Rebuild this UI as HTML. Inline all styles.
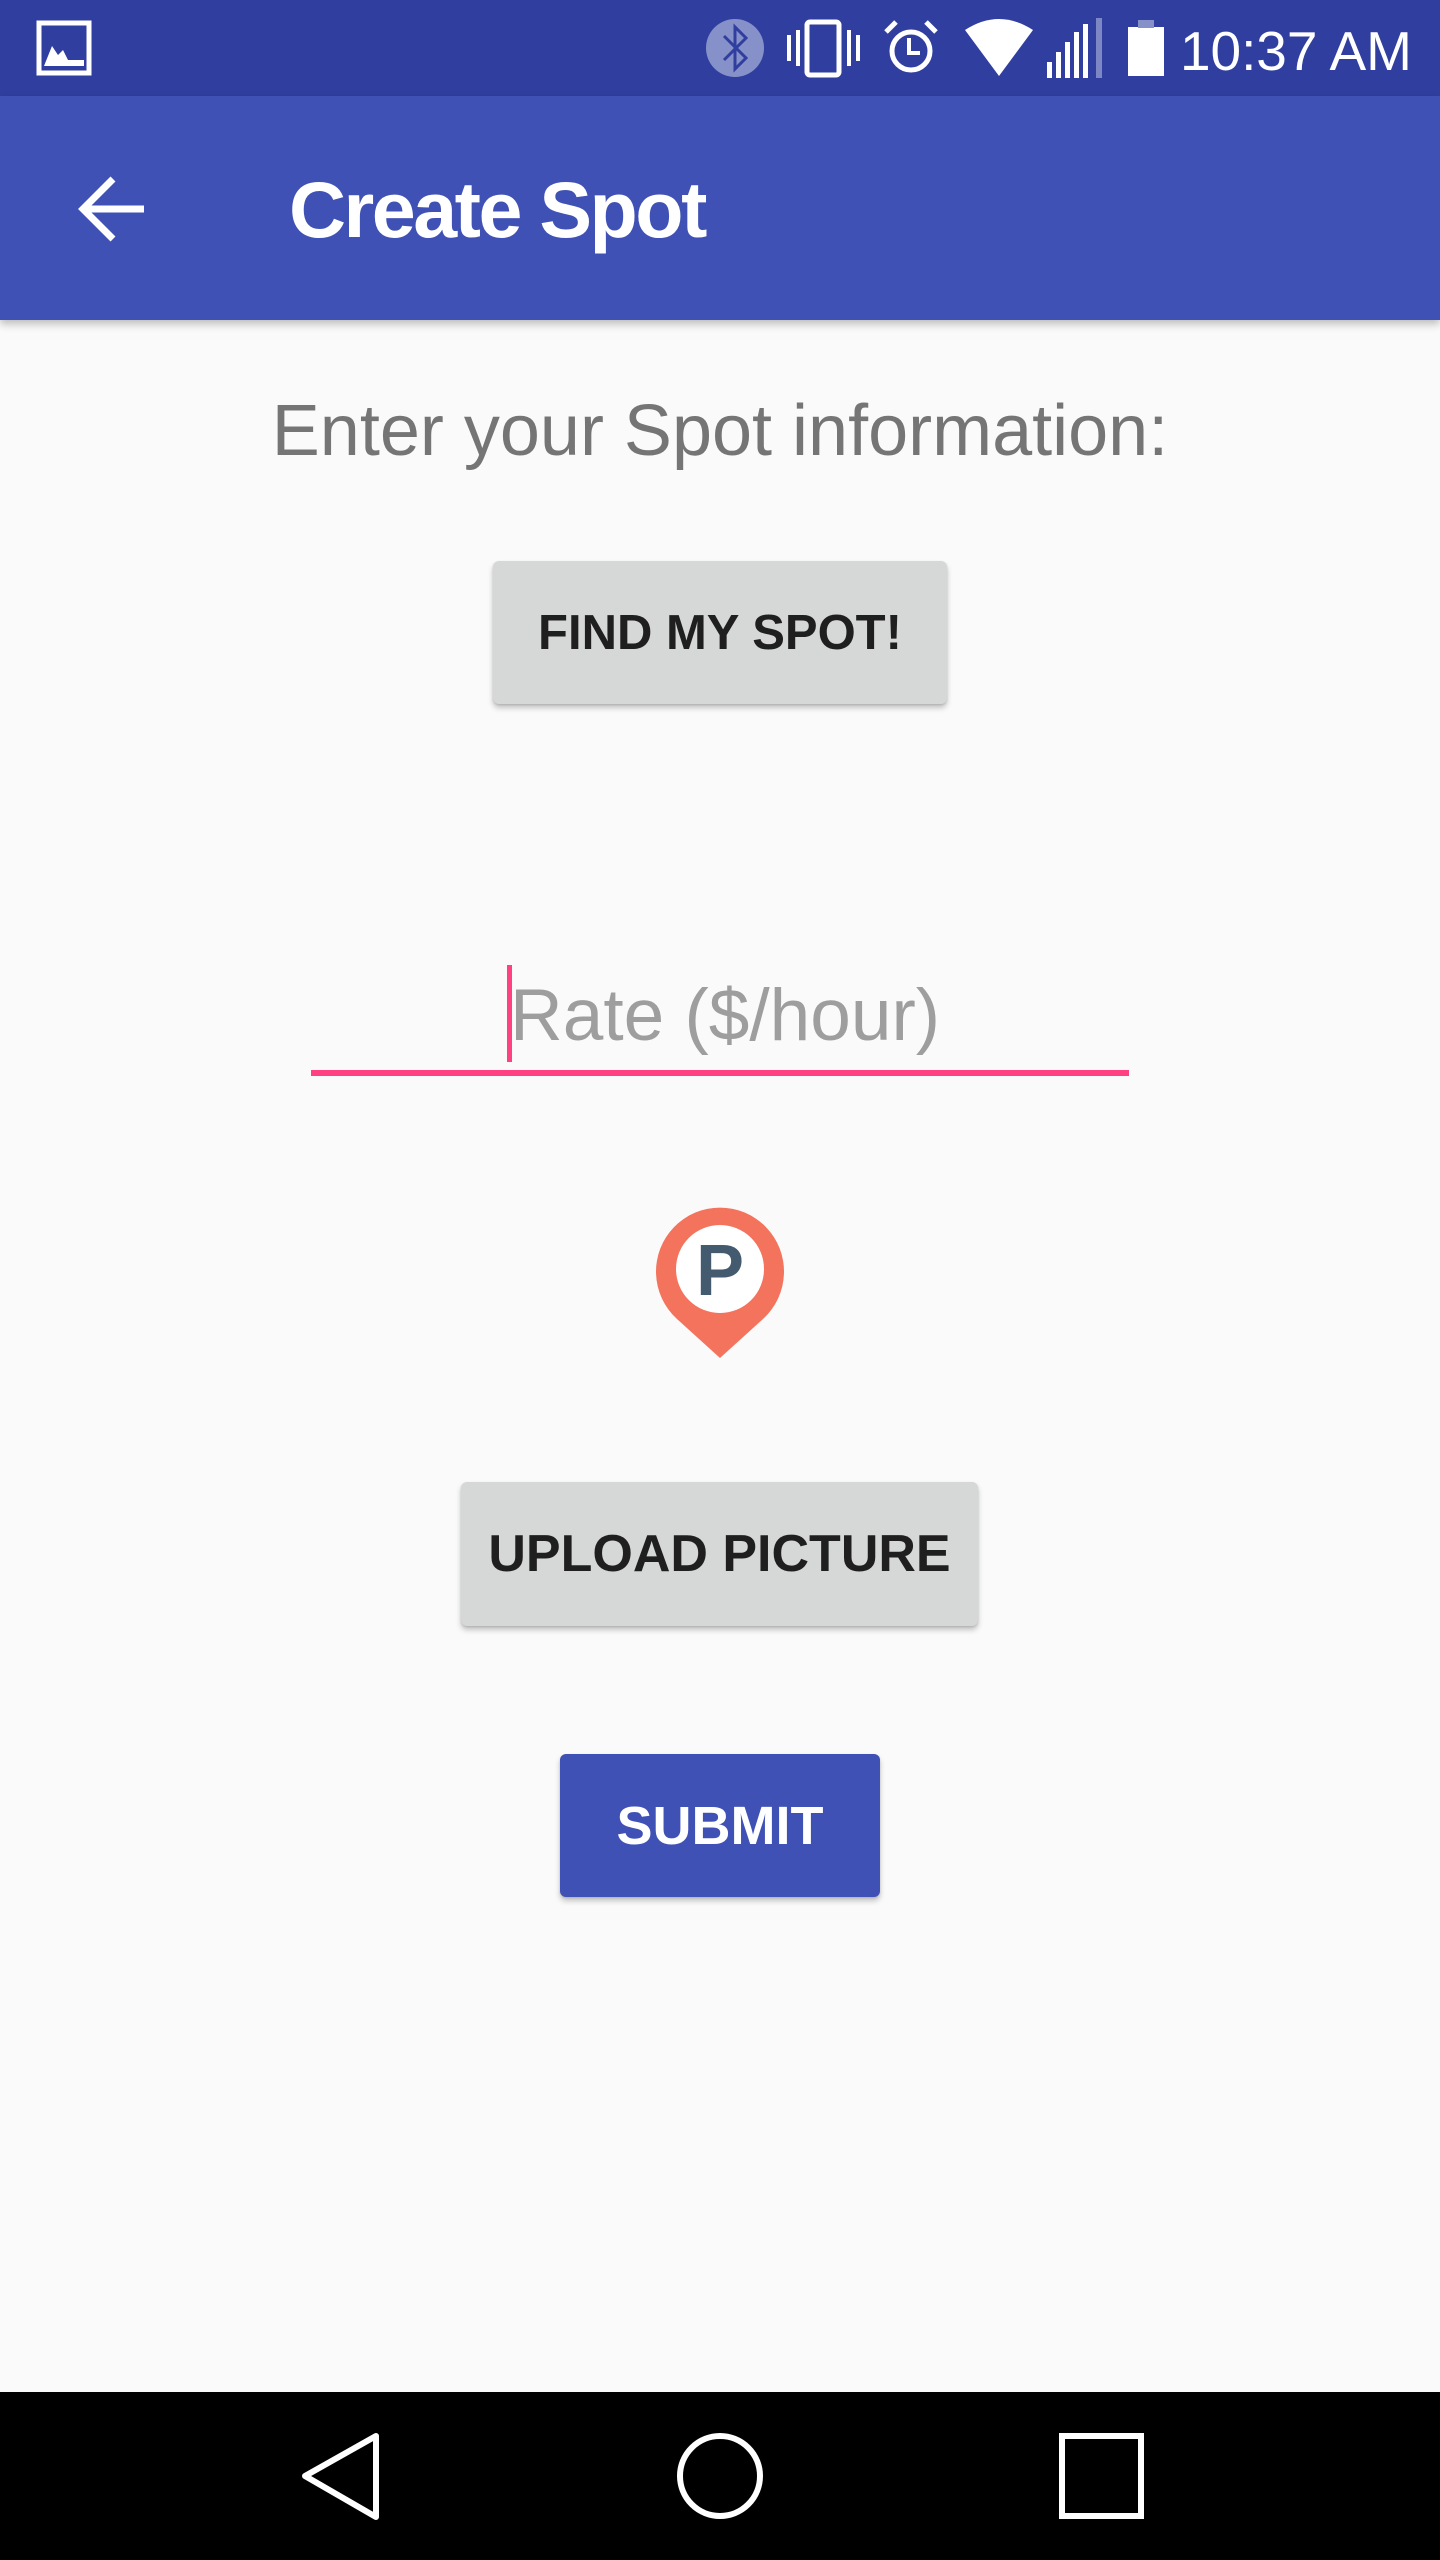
<!DOCTYPE html>
<html><head><meta charset="utf-8"><style>
*{margin:0;padding:0;box-sizing:border-box}
body{width:1440px;height:2560px;background:#FAFAFA;position:relative;overflow:hidden;font-family:"Liberation Sans",sans-serif}
.abs{position:absolute}
.btn{position:absolute;border-radius:6px;box-shadow:0 4px 6px rgba(0,0,0,0.22),0 1px 2px rgba(0,0,0,0.12);display:flex;align-items:center;justify-content:center;font-weight:bold;white-space:nowrap}
</style></head><body>
<div class="abs" style="left:0;top:0;width:1440px;height:96px;background:#303F9F"></div>
<div class="abs" style="left:0;top:96px;width:1440px;height:224px;background:#3F51B5;box-shadow:0 4px 8px rgba(0,0,0,0.25)"></div>

<svg class="abs" style="left:0;top:0" width="1440" height="96">
 <rect x="39" y="23" width="50" height="50" fill="none" stroke="#fff" stroke-width="5"/>
 <path d="M44 66 L52 46 L58 55 L63 50 L68 60 L84 60 L84 66 Z" fill="#fff"/>
 <ellipse cx="735" cy="48" rx="29" ry="29" fill="#8791C9"/>
 <path d="M724 36 L746 58 L735 69 L735 27 L746 38 L724 60" fill="none" stroke="#303F9F" stroke-width="3"/>
 <rect x="807" y="22" width="32" height="53" rx="3" fill="none" stroke="#fff" stroke-width="5"/>
 <rect x="787" y="35" width="4" height="26" fill="#fff"/><rect x="796" y="30" width="4" height="36" fill="#fff"/>
 <rect x="847" y="30" width="4" height="36" fill="#fff"/><rect x="856" y="35" width="4" height="26" fill="#fff"/>
 <circle cx="911" cy="51" r="19" fill="none" stroke="#fff" stroke-width="5"/>
 <path d="M909 38 V53 H920" fill="none" stroke="#fff" stroke-width="4"/>
 <path d="M886 32 L896 22 M936 32 L926 22" stroke="#fff" stroke-width="5"/>
 <path d="M965 30 Q999 8 1033 30 L999 76 Z" fill="#fff"/>
 <rect x="1047" y="62" width="5" height="16" fill="#fff"/><rect x="1056" y="52" width="5" height="26" fill="#fff"/>
 <rect x="1065" y="42" width="5" height="36" fill="#fff"/><rect x="1074" y="32" width="5" height="46" fill="#fff"/>
 <rect x="1083" y="24" width="5" height="54" fill="#fff"/><rect x="1096" y="18" width="6" height="60" fill="#7c87c4"/>
 <rect x="1128" y="27" width="36" height="49" fill="#fff"/><rect x="1138" y="20" width="16" height="8" fill="#8791C9"/>
 <text x="1180" y="70" font-family="Liberation Sans" font-size="55" fill="#fff" textLength="232">10:37 AM</text>
</svg>

<svg class="abs" style="top:174px;left:78px" width="70" height="70">
 <path d="M5 35 H66 M35 5 L5 35 L35 65" fill="none" stroke="#fff" stroke-width="7"/>
</svg>
<div class="abs" style="left:289px;top:165px;font-size:79px;font-weight:bold;color:#fff;line-height:90px;letter-spacing:-2.5px;white-space:nowrap">Create Spot</div>

<div class="abs" style="left:0;width:1440px;top:386px;text-align:center;font-size:72px;color:#757575;line-height:90px;white-space:nowrap">Enter your Spot information:</div>

<div class="btn" style="left:493px;top:561px;width:454px;height:143px;background:#D6D7D7;color:#1f1f1f;font-size:49px">FIND MY SPOT!</div>

<div class="abs" style="left:507px;top:965px;width:5px;height:97px;background:#FF4081"></div>
<div class="abs" style="left:510px;top:976px;font-size:73px;color:#9E9E9E;line-height:80px;white-space:nowrap">Rate ($/hour)</div>
<div class="abs" style="left:311px;top:1070px;width:818px;height:6px;background:#FF4081"></div>

<svg class="abs" style="left:655px;top:1203px" width="130" height="158">
 <path d="M65 155 L22 116 A64 64 0 1 1 108 116 Z" fill="#F3735D"/>
 <circle cx="65" cy="66" r="44" fill="#fff"/>
 <text x="65" y="92" text-anchor="middle" font-family="Liberation Sans" font-weight="bold" font-size="72" fill="#435A6F">P</text>
</svg>

<div class="btn" style="left:461px;top:1482px;width:517px;height:144px;background:#D6D7D7;color:#1f1f1f;font-size:52px">UPLOAD PICTURE</div>

<div class="btn" style="left:560px;top:1754px;width:320px;height:143px;background:#3F51B5;color:#fff;font-size:54px">SUBMIT</div>

<div class="abs" style="left:0;top:2392px;width:1440px;height:168px;background:#000"></div>
<svg class="abs" style="left:0;top:2392px" width="1440" height="168">
 <path d="M376 44 L376 125 L305 84 Z" fill="none" stroke="#fff" stroke-width="6" stroke-linejoin="round"/>
 <circle cx="720" cy="84" r="40" fill="none" stroke="#fff" stroke-width="6"/>
 <rect x="1062" y="44" width="79" height="80" fill="none" stroke="#fff" stroke-width="6"/>
</svg>
</body></html>
